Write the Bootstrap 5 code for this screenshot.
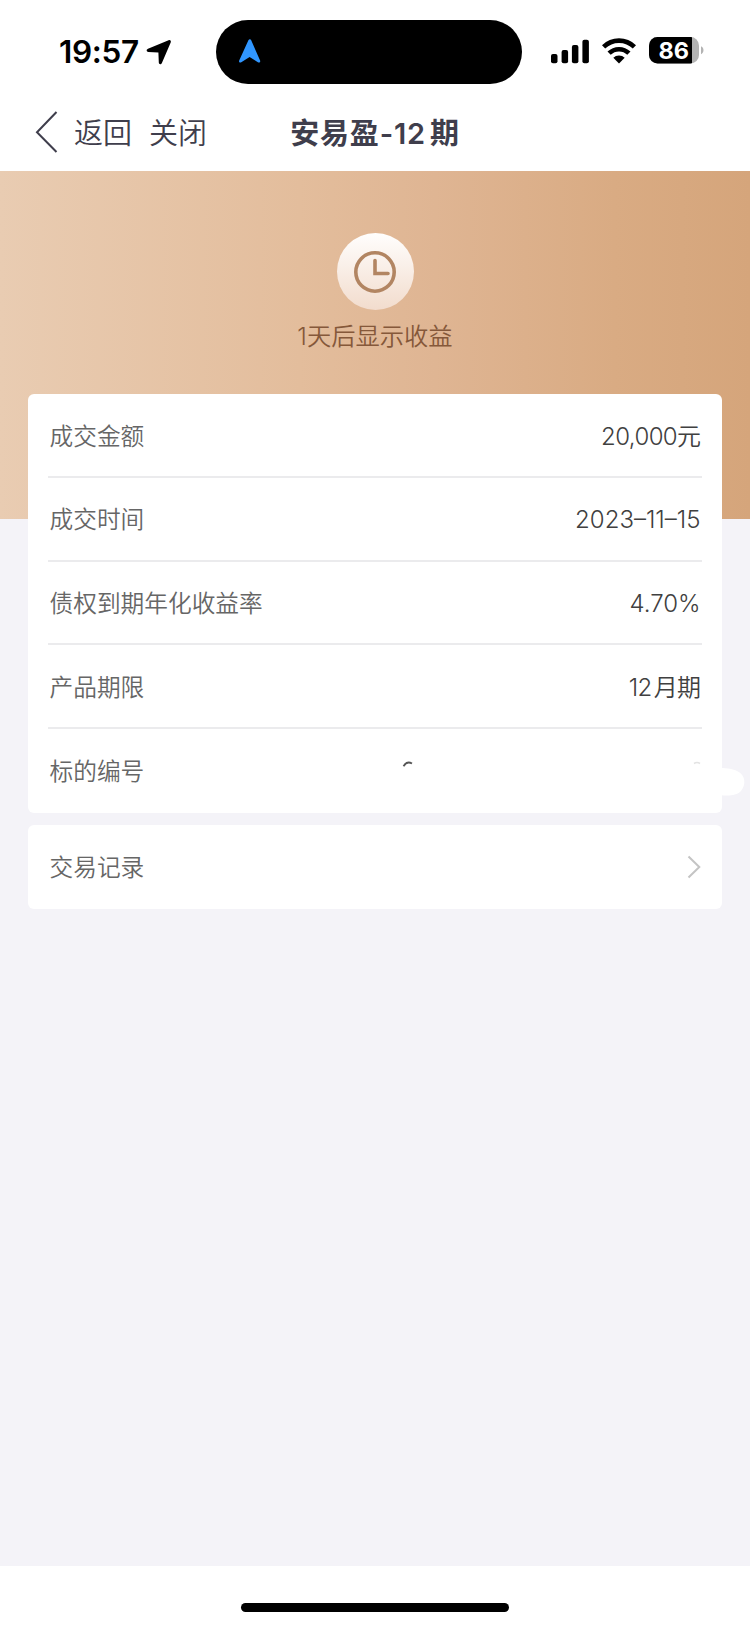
<!DOCTYPE html>
<html lang="zh-CN">
<head>
<meta charset="utf-8">
<meta name="viewport" content="width=device-width, initial-scale=1">
<title>安易盈-12期</title>
<link href="https://cdn.jsdelivr.net/npm/bootstrap@5.3.0/dist/css/bootstrap.min.css" rel="stylesheet">
<style>
  body { font-family: Inter, "Noto Sans CJK SC", sans-serif; background: #f4f3f8; width: 750px; height: 1626px; overflow: hidden; line-height: 1; }
  svg { display: block; flex: none; }
  .status-bar { height: 104px; padding: 20px 40px 0 59px; }
  .status-row { height: 64px; }
  .clock { font-size: 31.5px; font-weight: 600; width: 80px; letter-spacing: -.3px; color: #000; white-space: nowrap; padding-bottom: 1px; }
  .island { width: 306px; height: 64px; border-radius: 32px; background: #000; margin-left: 44px; padding-left: 22px; }
  .title-bar { height: 67px; padding-bottom: 7px; color: #3f3e4c; }
  .nav-item-text { font-size: 29px; line-height: 40px; font-weight: 350; }
  .page-title { font-size: 29px; font-weight: 600; letter-spacing: .8px; line-height: 40px; }
  .hero { height: 348px; margin-bottom: -125px; padding-top: 62px; color: #85583a; background: linear-gradient(90deg, #e9ccb2 0%, #e3bd9c 40%, #dfb593 58%, #d9ab83 82%, #d5a57b 100%); }
  .hero-icon { width: 77px; height: 77px; background: linear-gradient(#fffefd, #f2dccd); }
  .hero-note { font-size: 24.3px; line-height: 36px; margin-top: 8px; font-weight: 350; }
  .panel { margin: 0 28px; background: #fff; border-radius: 6px; padding: 0 20px; }
  .line-row { height: 83.8px; padding: 3.5px 1.5px 0 1.5px; border-bottom: 2px solid #ebebed; }
  .line-row:last-child { border-bottom-color: transparent; }
  .line-label { font-size: 23.7px; color: #666; font-weight: 350; line-height: 36px; }
  .line-value { font-size: 24px; color: #404040; font-weight: 350; line-height: 36px; }
  .tight { letter-spacing: -.6px; }
  .redacted { right: -44px; top: 31px; }
  .home-area { height: 60px; background: #fff; padding-top: 37px; }
  .home-bar { width: 268px; height: 9px; border-radius: 5px; background: #000; }
</style>
</head>
<body class="d-flex flex-column">
<header class="bg-white">
  <div class="status-bar">
    <div class="status-row d-flex align-items-center">
      <div class="clock">19:57</div>
      <svg width="26" height="26" viewBox="0 0 26 26" style="margin-left:7px;margin-top:-1px"><path d="M22.6 1.2 2 9.8c-1.9.9-1.7 3 .4 3.2l10 .5.4 10c.1 2 2.3 2.4 3.1.5l8.8-20.4c.7-1.5-.4-3-2.1-2.4z" fill="#000"/></svg>
      <div class="island d-flex align-items-center">
        <svg width="24" height="26" viewBox="0 0 24 26" style="margin-top:-2px"><path d="M10.4 2.3 1.2 22.5c-.7 1.6.7 2.7 2.1 1.8l8.3-5.4 8.3 5.4c1.5.9 2.8-.2 2.2-1.8L13.2 2.3c-.5-1.5-2.2-1.5-2.8 0z" fill="#3096ff"/></svg>
      </div>
      <svg width="38" height="25" viewBox="0 0 38 25" style="margin-left:29px;margin-top:-2px"><rect x="0" y="15" width="6.5" height="9.3" rx="2"/><rect x="10.6" y="11" width="6.5" height="13.3" rx="2"/><rect x="20.9" y="6" width="6.5" height="18.3" rx="2"/><rect x="31.4" y=".7" width="6.5" height="23.6" rx="2"/></svg>
      <svg width="34" height="26" viewBox="0 0 34 26" style="margin-left:13px;margin-top:-3px"><g fill="none" stroke="#000" stroke-width="4.6"><path d="M1.6 8.9a22 22 0 0 1 30.8 0"/><path d="M7.1 15.2a14.2 14.2 0 0 1 19.8 0"/></g><path d="M11.3 19.8a8 8 0 0 1 11.4 0L17 25.4z"/></svg>
      <svg width="56" height="27" viewBox="0 0 56 27" style="margin-left:13px;margin-top:-3px"><defs><clipPath id="cell"><rect width="50" height="26.5" rx="8.5"/></clipPath></defs><g clip-path="url(#cell)"><rect width="50" height="27" fill="#b3b3b3"/><rect width="43" height="27"/></g><path d="M52 9.3c3.3 1.2 3.3 6.7 0 8z" fill="#b3b3b3"/><text x="24.8" y="21.9" text-anchor="middle" font-family="Inter" font-size="23.5" font-weight="700" fill="#fff">86</text></svg>
    </div>
  </div>
  <nav class="title-bar d-flex align-items-center position-relative justify-content-center">
    <div class="position-absolute start-0 d-flex align-items-center ps-4">
      <svg class="ms-2" width="28" height="44" viewBox="0 0 28 44" style="margin-top:-4px"><path d="M24.5 2 5 22.2 24.5 42" fill="none" stroke="#3f3e4c" stroke-width="2"/></svg>
      <span class="nav-item-text" style="margin-left:14px">返回</span>
      <span class="nav-item-text" style="margin-left:17px">关闭</span>
    </div>
    <h1 class="page-title m-0">安易盈-12<span class="ms-1">期</span></h1>
  </nav>
</header>
<section class="hero d-flex flex-column align-items-center">
  <div class="hero-icon rounded-circle d-flex align-items-center justify-content-center">
    <svg width="42" height="42" viewBox="0 0 42 42" fill="none" stroke="#b28562" stroke-width="3.6"><circle cx="21" cy="21" r="19.2"/><path d="M21 9.5v13h13" stroke-linecap="round"/></svg>
  </div>
  <div class="hero-note">1天后显示收益</div>
</section>
<main class="flex-grow-1">
  <section class="panel">
    <div class="line-row d-flex align-items-center justify-content-between"><span class="line-label">成交金额</span><span class="line-value tight">20,000元</span></div>
    <div class="line-row d-flex align-items-center justify-content-between"><span class="line-label">成交时间</span><span class="line-value">2023–11–15</span></div>
    <div class="line-row d-flex align-items-center justify-content-between"><span class="line-label">债权到期年化收益率</span><span class="line-value">4.70%</span></div>
    <div class="line-row d-flex align-items-center justify-content-between"><span class="line-label">产品期限</span><span class="line-value tight">12<span style="margin-left:2px">月期</span></span></div>
    <div class="line-row d-flex align-items-center justify-content-between position-relative"><span class="line-label">标的编号</span>
      <svg class="redacted position-absolute" width="344" height="40" viewBox="0 0 344 40"><path d="M1.5 6.2Q5 .6 10 3.6" fill="none" stroke="#555" stroke-width="1.8"/><path d="M292 3.5q3-2 6 0" fill="none" stroke="#e3e3e3" stroke-width="1.6"/><path d="M318 8c8 0 13 1 17 3 9 4 9 14 4 20-5 5-13 5-21 4z" fill="#fff"/></svg>
    </div>
  </section>
  <section class="panel" style="margin-top:12px">
    <div class="line-row d-flex align-items-center justify-content-between"><span class="line-label">交易记录</span>
      <svg width="14" height="24" viewBox="0 0 14 24" style="margin-top:-2px"><path d="M1.5 1.5 12.3 12 1.5 22.5" fill="none" stroke="#c4c4c4" stroke-width="2"/></svg>
    </div>
  </section>
</main>
<footer class="home-area d-flex justify-content-center"><div class="home-bar"></div></footer>
<script src="https://cdn.jsdelivr.net/npm/bootstrap@5.3.0/dist/js/bootstrap.bundle.min.js"></script>
</body>
</html>
